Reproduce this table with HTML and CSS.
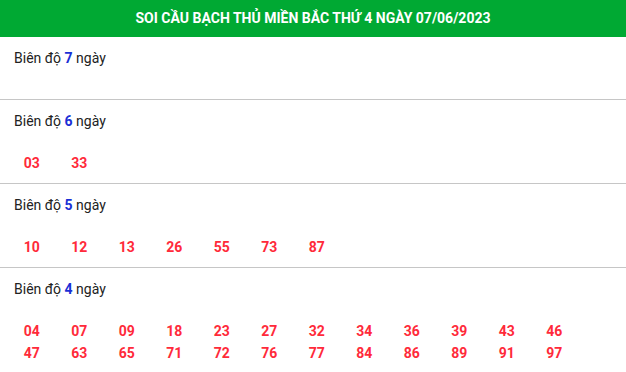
FILE: index.html
```html
<!DOCTYPE html>
<html lang="vi">
<head>
<meta charset="utf-8">
<link rel="stylesheet" href="styles.css">
</head>
<body>
<div class="box">
  <h2 class="title">SOI CẦU BẠCH THỦ MIỀN BẮC THỨ 4 NGÀY 07/06/2023</h2>
  <div class="sec">
    <div class="label">Biên độ <b>7</b> ngày</div>
    <div class="nums"></div>
  </div>
  <div class="sec">
    <div class="label">Biên độ <b>6</b> ngày</div>
    <div class="nums"><span>03</span><span>33</span></div>
  </div>
  <div class="sec">
    <div class="label">Biên độ <b>5</b> ngày</div>
    <div class="nums"><span>10</span><span>12</span><span>13</span><span>26</span><span>55</span><span>73</span><span>87</span></div>
  </div>
  <div class="sec">
    <div class="label">Biên độ <b>4</b> ngày</div>
    <div class="nums"><span>04</span><span>07</span><span>09</span><span>18</span><span>23</span><span>27</span><span>32</span><span>34</span><span>36</span><span>39</span><span>43</span><span>46</span><span>47</span><span>63</span><span>65</span><span>71</span><span>72</span><span>76</span><span>77</span><span>84</span><span>86</span><span>89</span><span>91</span><span>97</span></div>
  </div>
</div>
</body>
</html>
```
FILE: styles.css
```css
html, body {
  margin: 0;
  padding: 0;
  background: #fff;
  font-family: Roboto, "Liberation Sans", sans-serif;
}
.title {
  margin: 0;
  height: 37px;
  line-height: 37px;
  background: #00a933;
  color: #fff;
  font-size: 14px;
  font-weight: 700;
  text-align: center;
}
.sec {
  border-bottom: 1px solid #c6c6c6;
}
.label {
  padding: 11px 14px 0;
  line-height: 20px;
  font-size: 14px;
  color: #222;
}
.label b {
  color: #1a2fd6;
  font-weight: 700;
}
.nums {
  display: flex;
  flex-wrap: wrap;
  width: 570px;
  padding: 21px 8px 9px;
  min-height: 1px;
}
.nums span {
  width: 47.5px;
  text-align: center;
  line-height: 22px;
  font-size: 14px;
  font-weight: 700;
  color: #ff2a3a;
}
```
